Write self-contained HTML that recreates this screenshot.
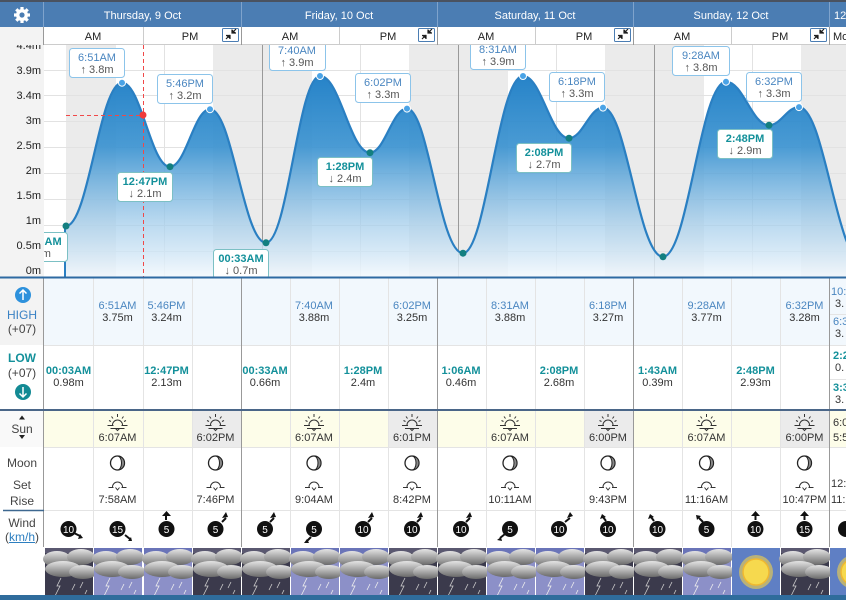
<!DOCTYPE html>
<html><head><meta charset="utf-8">
<style>
*{margin:0;padding:0;box-sizing:border-box}
body{width:846px;height:600px;overflow:hidden;background:#fff;font-family:"Liberation Sans",sans-serif;font-size:11px;color:#333;position:relative}
.a{position:absolute}
.c{position:absolute;width:70px;margin-left:-35px;text-align:center;line-height:12px;white-space:nowrap}
.ht{color:#4a86c0}
.lt{color:#13909a;font-weight:bold}
.lb{position:absolute;text-align:center;width:44px;left:0;color:#444;font-size:12px}
</style></head><body>
<div class="a" style="left:0;top:0;width:846px;height:27px;background:#4b7db3;border-top:2px solid #4a5260"></div>
<div class="a" style="left:43px;top:2px;width:1px;height:25px;background:#7fa3cc"></div>
<div class="a" style="left:241px;top:2px;width:1px;height:25px;background:#7fa3cc"></div>
<div class="a" style="left:437px;top:2px;width:1px;height:25px;background:#7fa3cc"></div>
<div class="a" style="left:633px;top:2px;width:1px;height:25px;background:#7fa3cc"></div>
<div class="a" style="left:829px;top:2px;width:1px;height:25px;background:#7fa3cc"></div>
<svg class="a" style="left:13px;top:6px" width="18" height="18" viewBox="0 0 18 18"><g fill="#fff"><circle cx="9" cy="9" r="6"/><g stroke="#fff" stroke-width="3.2"><line x1="9" y1="1" x2="9" y2="17"/><line x1="1" y1="9" x2="17" y2="9"/><line x1="3.3" y1="3.3" x2="14.7" y2="14.7"/><line x1="14.7" y1="3.3" x2="3.3" y2="14.7"/></g></g><circle cx="9" cy="9" r="2.6" fill="#4b7db3"/></svg>
<div class="a" style="left:44px;top:10px;width:197px;text-align:center;color:#fff">Thursday, 9 Oct</div>
<div class="a" style="left:241px;top:10px;width:196px;text-align:center;color:#fff">Friday, 10 Oct</div>
<div class="a" style="left:437px;top:10px;width:196px;text-align:center;color:#fff">Saturday, 11 Oct</div>
<div class="a" style="left:633px;top:10px;width:196px;text-align:center;color:#fff">Sunday, 12 Oct</div>
<div class="a" style="left:834px;top:10px;color:#fff">12</div>
<div class="a" style="left:44px;top:27px;width:802px;height:18px;background:#fff;border-bottom:1px solid #ccc"></div>
<div class="a" style="left:0;top:27px;width:44px;height:18px;background:#f3f3f3"></div>
<div class="a" style="left:43px;top:27px;width:1px;height:250px;background:#999"></div>
<div class="a" style="left:143px;top:27px;width:1px;height:18px;background:#ccc"></div>
<div class="a" style="left:241px;top:27px;width:1px;height:18px;background:#999"></div>
<div class="a" style="left:339px;top:27px;width:1px;height:18px;background:#ccc"></div>
<div class="a" style="left:437px;top:27px;width:1px;height:18px;background:#999"></div>
<div class="a" style="left:535px;top:27px;width:1px;height:18px;background:#ccc"></div>
<div class="a" style="left:633px;top:27px;width:1px;height:18px;background:#999"></div>
<div class="a" style="left:731px;top:27px;width:1px;height:18px;background:#ccc"></div>
<div class="a" style="left:829px;top:27px;width:1px;height:18px;background:#999"></div>
<div class="c" style="left:93px;top:31px;color:#222">AM</div><div class="c" style="left:190px;top:31px;color:#222">PM</div>
<div class="c" style="left:290px;top:31px;color:#222">AM</div><div class="c" style="left:388px;top:31px;color:#222">PM</div>
<div class="c" style="left:486px;top:31px;color:#222">AM</div><div class="c" style="left:584px;top:31px;color:#222">PM</div>
<div class="c" style="left:682px;top:31px;color:#222">AM</div><div class="c" style="left:780px;top:31px;color:#222">PM</div>
<div class="a" style="left:833px;top:31px;color:#222">Mo</div>
<svg class="a" style="left:0;top:0" width="846" height="45"><g fill="none" stroke="#4b7db3">
<rect x="222.5" y="28.5" width="16" height="13" rx="1"/><rect x="418.5" y="28.5" width="16" height="13" rx="1"/><rect x="614.5" y="28.5" width="16" height="13" rx="1"/><rect x="810.5" y="28.5" width="16" height="13" rx="1"/></g>
<g stroke="#222" stroke-width="1.2"><path d="M226 39l4-4M232 33l4-4M226 35.5h4v3.5M232 29.5v3.5h4"/><path d="M422 39l4-4M428 33l4-4M422 35.5h4v3.5M428 29.5v3.5h4"/><path d="M618 39l4-4M624 33l4-4M618 35.5h4v3.5M624 29.5v3.5h4"/><path d="M814 39l4-4M820 33l4-4M814 35.5h4v3.5M820 29.5v3.5h4"/></g></svg>
<svg class="a" style="left:0;top:45px" width="846" height="233" viewBox="0 45 846 233">
<defs><linearGradient id="g" x1="0" y1="76" x2="0" y2="277" gradientUnits="userSpaceOnUse"><stop offset="0" stop-color="#2683c8"/><stop offset="0.35" stop-color="#3a92d0" stop-opacity="0.92"/><stop offset="0.75" stop-color="#a9d0ec" stop-opacity="0.75"/><stop offset="1" stop-color="#f2f8fd" stop-opacity="0.85"/></linearGradient>
<clipPath id="cp"><rect x="44" y="45" width="802" height="233"/></clipPath></defs>
<rect x="0" y="45" width="44" height="233" fill="#f3f3f3"/>
<g clip-path="url(#cp)">
<rect x="44" y="45" width="802" height="233" fill="#fff"/>
<g fill="#ebebeb"><rect x="66" y="45" width="50" height="232"/><rect x="213" y="45" width="99" height="232"/><rect x="409" y="45" width="99" height="232"/><rect x="605" y="45" width="99" height="232"/><rect x="801" y="45" width="50" height="232"/></g>
<g stroke="#e2e2e2"><path d="M44 251.5H846M44 225.5H846M44 199.5H846M44 173.5H846M44 147.5H846M44 121.5H846M44 95.5H846M44 70.5H846"/><path d="M164.5 45V277M360.5 45V277M556.5 45V277M752.5 45V277"/></g>
<g stroke="#999"><path d="M262.5 45V277M458.5 45V277M654.5 45V277M849.5 45V277"/></g>
<path fill="url(#g)" d="M66,226 C88.4,226 99.6,82.7 122,82.7 C141.2,82.7 150.8,166.7 170,166.7 C186,166.7 194,109.2 210,109.2 C232.4,109.2 243.6,242.8 266,242.8 C287.6,242.8 298.4,76 320,76 C340,76 350,152.7 370,152.7 C384.8,152.7 392.2,108.6 407,108.6 C428.6,108.6 439.4,253.2 463,253.2 C486,253.2 498.2,76 523,76 C541.4,76 550.6,138.2 569,138.2 C582.6,138.2 589.4,107.6 603,107.6 C626.6,107.6 638.4,256.8 663,256.8 C688,256.8 700.4,81.7 726,81.7 C743.2,81.7 751.8,125.2 769,125.2 C781,125.2 787,107.1 799,107.1 C824.2,107.1 836.8,261 862,261 L862,277 L66,277 Z"/>
<path fill="none" stroke="#2a7fc2" stroke-width="2.2" d="M66,226 C88.4,226 99.6,82.7 122,82.7 C141.2,82.7 150.8,166.7 170,166.7 C186,166.7 194,109.2 210,109.2 C232.4,109.2 243.6,242.8 266,242.8 C287.6,242.8 298.4,76 320,76 C340,76 350,152.7 370,152.7 C384.8,152.7 392.2,108.6 407,108.6 C428.6,108.6 439.4,253.2 463,253.2 C486,253.2 498.2,76 523,76 C541.4,76 550.6,138.2 569,138.2 C582.6,138.2 589.4,107.6 603,107.6 C626.6,107.6 638.4,256.8 663,256.8 C688,256.8 700.4,81.7 726,81.7 C743.2,81.7 751.8,125.2 769,125.2 C781,125.2 787,107.1 799,107.1 C824.2,107.1 836.8,261 862,261"/>
<path d="M65 226V277" stroke="#2a7fc2" stroke-width="2"/>
<g stroke="#f04848" stroke-dasharray="4,3" fill="none"><path d="M143.5 45V277M66 115.5H143"/></g>
<circle cx="143" cy="115" r="3.5" fill="#f03a3a"/>
<g fill="#4aa3e6" stroke="#fff" stroke-width="1"><circle cx="122" cy="82.7" r="3.5"/><circle cx="210" cy="109.2" r="3.5"/><circle cx="320" cy="76" r="3.5"/><circle cx="407" cy="108.6" r="3.5"/><circle cx="523" cy="76" r="3.5"/><circle cx="603" cy="107.6" r="3.5"/><circle cx="726" cy="81.7" r="3.5"/><circle cx="799" cy="107.1" r="3.5"/></g>
<g fill="#137f80"><circle cx="66" cy="226" r="3.5"/><circle cx="170" cy="166.7" r="3.5"/><circle cx="266" cy="242.8" r="3.5"/><circle cx="370" cy="152.7" r="3.5"/><circle cx="463" cy="253.2" r="3.5"/><circle cx="569" cy="138.2" r="3.5"/><circle cx="663" cy="256.8" r="3.5"/><circle cx="769" cy="125.2" r="3.5"/></g>
<g font-family="Liberation Sans,sans-serif" font-size="11" text-anchor="middle">
<g fill="#fff" stroke="#8cc4ea"><rect x="69.5" y="48.5" width="55" height="29" rx="3"/><rect x="157.5" y="74.5" width="55" height="29" rx="3"/><rect x="269.5" y="41.5" width="56" height="29" rx="3"/><rect x="355.5" y="73.5" width="55" height="29" rx="3"/><rect x="470.5" y="40.5" width="55" height="29" rx="3"/><rect x="549.5" y="72.5" width="55" height="29" rx="3"/><rect x="672.5" y="46.5" width="57" height="29" rx="3"/><rect x="746.5" y="72.5" width="55" height="29" rx="3"/></g>
<g fill="#fff" stroke="#7cc0c4"><rect x="10.5" y="232.5" width="57" height="29" rx="3"/><rect x="117.5" y="172.5" width="55" height="29" rx="3"/><rect x="213.5" y="249.5" width="55" height="29" rx="3"/><rect x="317.5" y="157.5" width="55" height="29" rx="3"/><rect x="516.5" y="143.5" width="55" height="29" rx="3"/><rect x="717.5" y="129.5" width="55" height="29" rx="3"/></g>
<g fill="#4a86c0"><text x="97" y="61">6:51AM</text><text x="185" y="87">5:46PM</text><text x="297" y="54">7:40AM</text><text x="383" y="86">6:02PM</text><text x="498" y="53">8:31AM</text><text x="577" y="85">6:18PM</text><text x="701" y="59">9:28AM</text><text x="774" y="85">6:32PM</text></g>
<g fill="#555"><text x="97" y="73">↑ 3.8m</text><text x="185" y="99">↑ 3.2m</text><text x="297" y="66">↑ 3.9m</text><text x="383" y="98">↑ 3.3m</text><text x="498" y="65">↑ 3.9m</text><text x="577" y="97">↑ 3.3m</text><text x="701" y="71">↑ 3.8m</text><text x="774" y="97">↑ 3.3m</text></g>
<g fill="#13909a" font-weight="bold"><text x="39" y="245">00:03AM</text><text x="145" y="185">12:47PM</text><text x="241" y="262">00:33AM</text><text x="345" y="170">1:28PM</text><text x="544" y="156">2:08PM</text><text x="745" y="142">2:48PM</text></g>
<g fill="#555"><text x="39" y="257">↓ 1m</text><text x="145" y="197">↓ 2.1m</text><text x="241" y="274">↓ 0.7m</text><text x="345" y="182">↓ 2.4m</text><text x="544" y="168">↓ 2.7m</text><text x="745" y="154">↓ 2.9m</text></g>
</g></g>
<g font-family="Liberation Sans,sans-serif" font-size="11" fill="#222" text-anchor="end"><text x="41" y="49">4.4m</text><text x="41" y="74">3.9m</text><text x="41" y="99">3.4m</text><text x="41" y="124">3m</text><text x="41" y="149">2.5m</text><text x="41" y="174">2m</text><text x="41" y="199">1.5m</text><text x="41" y="224">1m</text><text x="41" y="249">0.5m</text><text x="41" y="274">0m</text></g>
</svg>
<div class="a" style="left:0;top:278px;width:846px;height:67px;background:#f2f8fd"></div>
<div class="a" style="left:0;top:278px;width:44px;height:132px;background:#f3f3f3"></div>
<div class="a" style="left:0;top:345px;width:44px;height:65px;background:#fff"></div>
<div class="a" style="left:44px;top:411px;width:802px;height:36px;background:#fdfde9"></div>
<div class="a" style="left:0;top:411px;width:44px;height:36px;background:#f9f9f9"></div>
<div class="a" style="left:192px;top:411px;width:49px;height:36px;background:#ebebeb"></div>
<div class="a" style="left:388px;top:411px;width:49px;height:36px;background:#ebebeb"></div>
<div class="a" style="left:584px;top:411px;width:49px;height:36px;background:#ebebeb"></div>
<div class="a" style="left:780px;top:411px;width:49px;height:36px;background:#ebebeb"></div>
<svg class="a" style="left:0;top:276px" width="846" height="324" viewBox="0 276 846 324">
<g stroke="#e4e4e4"><path d="M93.5 278V547M143.5 278V547M192.5 278V547M290.5 278V547M339.5 278V547M388.5 278V547M486.5 278V547M535.5 278V547M584.5 278V547M682.5 278V547M731.5 278V547M780.5 278V547"/><path d="M44 345.5H846M44 447.5H846M44 510.5H846"/><path d="M829 314.5H846M829 379.5H846"/></g>
<g stroke="#999"><path d="M43.5 278V600M241.5 278V547M437.5 278V547M633.5 278V547M829.5 278V547"/></g>
<path d="M0 277.5H846" stroke="#2e6aa2" stroke-width="2"/>
<path d="M0 410H846" stroke="#4a6688" stroke-width="2"/>
<path d="M3 510.5H44" stroke="#3e6890" stroke-width="1.5"/>
<circle cx="23" cy="295" r="8" fill="#2d91dc"/><path d="M23 300V290M19.5 293.5L23 290L26.5 293.5" stroke="#fff" stroke-width="1.5" fill="none"/>
<circle cx="23" cy="392" r="8" fill="#138a94"/><path d="M23 387V397M19.5 393.5L23 397L26.5 393.5" stroke="#fff" stroke-width="1.5" fill="none"/>
<path d="M19 419.5h6l-3-4z M19 435h6l-3 4z" fill="#222"/>
</svg>
<div class="lb" style="top:308px;color:#3a82c4;font-size:12px">HIGH</div>
<div class="lb" style="top:322px">(+07)</div>
<div class="lb" style="top:351px;color:#13909a;font-weight:bold;font-size:12px">LOW</div>
<div class="lb" style="top:366px">(+07)</div>
<div class="lb" style="top:422px">Sun</div>
<div class="lb" style="top:456px">Moon</div>
<div class="lb" style="top:478px">Set</div>
<div class="lb" style="top:494px">Rise</div>
<div class="lb" style="top:516px">Wind</div>
<div class="lb" style="top:530px">(<span style="color:#2d7fc0;text-decoration:underline">km/h</span>)</div>
<div class="c ht" style="left:117.5px;top:300px">6:51AM</div><div class="c" style="left:117.5px;top:312px">3.75m</div>
<div class="c ht" style="left:166.5px;top:300px">5:46PM</div><div class="c" style="left:166.5px;top:312px">3.24m</div>
<div class="c ht" style="left:314px;top:300px">7:40AM</div><div class="c" style="left:314px;top:312px">3.88m</div>
<div class="c ht" style="left:412px;top:300px">6:02PM</div><div class="c" style="left:412px;top:312px">3.25m</div>
<div class="c ht" style="left:510px;top:300px">8:31AM</div><div class="c" style="left:510px;top:312px">3.88m</div>
<div class="c ht" style="left:608px;top:300px">6:18PM</div><div class="c" style="left:608px;top:312px">3.27m</div>
<div class="c ht" style="left:706.5px;top:300px">9:28AM</div><div class="c" style="left:706.5px;top:312px">3.77m</div>
<div class="c ht" style="left:804.5px;top:300px">6:32PM</div><div class="c" style="left:804.5px;top:312px">3.28m</div>
<div class="a ht" style="left:831px;top:286px">10:</div><div class="a" style="left:835px;top:298px">3.</div>
<div class="a ht" style="left:833px;top:316px">6:3</div><div class="a" style="left:835px;top:328px">3.</div>
<div class="c lt" style="left:68.5px;top:365px">00:03AM</div><div class="c" style="left:68.5px;top:377px">0.98m</div>
<div class="c lt" style="left:166.5px;top:365px">12:47PM</div><div class="c" style="left:166.5px;top:377px">2.13m</div>
<div class="c lt" style="left:265px;top:365px">00:33AM</div><div class="c" style="left:265px;top:377px">0.66m</div>
<div class="c lt" style="left:363px;top:365px">1:28PM</div><div class="c" style="left:363px;top:377px">2.4m</div>
<div class="c lt" style="left:461px;top:365px">1:06AM</div><div class="c" style="left:461px;top:377px">0.46m</div>
<div class="c lt" style="left:559px;top:365px">2:08PM</div><div class="c" style="left:559px;top:377px">2.68m</div>
<div class="c lt" style="left:657.5px;top:365px">1:43AM</div><div class="c" style="left:657.5px;top:377px">0.39m</div>
<div class="c lt" style="left:755.5px;top:365px">2:48PM</div><div class="c" style="left:755.5px;top:377px">2.93m</div>
<div class="a lt" style="left:833px;top:350px">2:2</div><div class="a" style="left:835px;top:362px">0.</div>
<div class="a lt" style="left:833px;top:382px">3:3</div><div class="a" style="left:835px;top:394px">3.</div>
<svg class="a" style="left:0;top:410px" width="846" height="140" viewBox="0 410 846 140">
<defs>
<g id="sr" fill="none" stroke="#333" stroke-width="1"><path d="M-5 425A5 5 0 0 1 5 425M-10 425.5H-4M4 425.5H10M-7 428.5H7M0 414V417M-6 416.5L-4.5 418.5M6 416.5L4.5 418.5M-8.5 420.5L-6.5 421.5M8.5 420.5L6.5 421.5M-2 428.5L0 430.5L2 428.5"/></g>
<g id="mn"><circle cx="0" cy="463" r="7" fill="#fff" stroke="#222" stroke-width="1.3"/><path d="M0 456A7 7 0 0 1 0 470A4 7 0 0 0 0 456z" fill="#888" stroke="#222" stroke-width="1"/></g>
<g id="mr" fill="none" stroke="#333" stroke-width="1"><path d="M-5 487A5 5 0 0 1 5 487M-9 487.5H-4M4 487.5H9M-2 487.5L0 490L2 487.5"/></g>
</defs>
<use href="#sr" x="117.5"/><use href="#sr" x="215.5"/><use href="#sr" x="314"/><use href="#sr" x="412"/><use href="#sr" x="510"/><use href="#sr" x="608"/><use href="#sr" x="706.5"/><use href="#sr" x="804.5"/>
<use href="#mn" x="117.5"/><use href="#mn" x="215.5"/><use href="#mn" x="314"/><use href="#mn" x="412"/><use href="#mn" x="510"/><use href="#mn" x="608"/><use href="#mn" x="706.5"/><use href="#mn" x="804.5"/>
<use href="#mr" x="117.5"/><use href="#mr" x="215.5"/><use href="#mr" x="314"/><use href="#mr" x="412"/><use href="#mr" x="510"/><use href="#mr" x="608"/><use href="#mr" x="706.5"/><use href="#mr" x="804.5"/>
<g font-family="Liberation Sans,sans-serif" font-size="10" text-anchor="middle" fill="#fff">
<g fill="#111"><circle cx="68.5" cy="529" r="8"/><circle cx="117.5" cy="529" r="8"/><circle cx="166.5" cy="529" r="8"/><circle cx="215.5" cy="529" r="8"/><circle cx="265" cy="529" r="8"/><circle cx="314" cy="529" r="8"/><circle cx="363" cy="529" r="8"/><circle cx="412" cy="529" r="8"/><circle cx="461" cy="529" r="8"/><circle cx="510" cy="529" r="8"/><circle cx="559" cy="529" r="8"/><circle cx="608" cy="529" r="8"/><circle cx="657.5" cy="529" r="8"/><circle cx="706.5" cy="529" r="8"/><circle cx="755.5" cy="529" r="8"/><circle cx="804.5" cy="529" r="8"/><circle cx="846" cy="529" r="8"/></g>
<g stroke="#111" stroke-width="2" fill="none"><path d="M74 533l6 3M125 535l5 4M166 520v-5M222 522l4-4M270 522l4-4M311 537l-4 4M368 522l4-4M417 522l4-4M466 522l4-4M505 534l-5 4M565 522l5-4M606 521l-3-4M654 521l-3-4M703 522l-4-4M755.5 520v-5M804.5 520v-5"/></g>
<g fill="#111"><path d="M78 539l5-1-3-4z M128 541l4 0-1-4z M162 516h9l-4.5-5z M222 518l6-1-2-5z M270 518l6-1-2-5z M304 543l5 0-2-4z M368 518l6-1-2-5z M417 518l6-1-2-5z M466 518l6-1-2-5z M497 540l5 1-1-4z M567 518l6-2-3-4z M600 519l6-2-4-3z M648 519l6-2-4-3z M697 520l4-4-5-1z M751 516h9l-4.5-5z M800 516h9l-4.5-5z"/></g>
<text x="68.5" y="533">10</text><text x="117.5" y="533">15</text><text x="166.5" y="533">5</text><text x="215.5" y="533">5</text><text x="265" y="533">5</text><text x="314" y="533">5</text><text x="363" y="533">10</text><text x="412" y="533">10</text><text x="461" y="533">10</text><text x="510" y="533">5</text><text x="559" y="533">10</text><text x="608" y="533">10</text><text x="657.5" y="533">10</text><text x="706.5" y="533">5</text><text x="755.5" y="533">10</text><text x="804.5" y="533">15</text></g>
</svg>
<div class="c" style="left:117.5px;top:432px">6:07AM</div><div class="c" style="left:215.5px;top:432px">6:02PM</div>
<div class="c" style="left:314px;top:432px">6:07AM</div><div class="c" style="left:412px;top:432px">6:01PM</div>
<div class="c" style="left:510px;top:432px">6:07AM</div><div class="c" style="left:608px;top:432px">6:00PM</div>
<div class="c" style="left:706.5px;top:432px">6:07AM</div><div class="c" style="left:804.5px;top:432px">6:00PM</div>
<div class="a" style="left:833px;top:417px">6:0</div><div class="a" style="left:833px;top:432px">5:5</div>
<div class="c" style="left:117.5px;top:494px">7:58AM</div><div class="c" style="left:215.5px;top:494px">7:46PM</div>
<div class="c" style="left:314px;top:494px">9:04AM</div><div class="c" style="left:412px;top:494px">8:42PM</div>
<div class="c" style="left:510px;top:494px">10:11AM</div><div class="c" style="left:608px;top:494px">9:43PM</div>
<div class="c" style="left:706.5px;top:494px">11:16AM</div><div class="c" style="left:804.5px;top:494px">10:47PM</div>
<div class="a" style="left:831px;top:478px">12:</div><div class="a" style="left:831px;top:494px">11:</div>
<svg class="a" style="left:0;top:547px" width="846" height="53" viewBox="0 547 846 53">
<defs>
<linearGradient id="cl" x1="0" y1="0" x2="0" y2="1"><stop offset="0" stop-color="#e4e4e4"/><stop offset="1" stop-color="#6a6a6a"/></linearGradient>
<g id="ng"><rect x="0" y="548" width="48" height="48" fill="#3b3a4c"/><rect x="0" y="548" width="48" height="5" fill="#5a5870"/><ellipse cx="12" cy="559" rx="14" ry="8" fill="url(#cl)"/><ellipse cx="36" cy="557" rx="14" ry="8" fill="url(#cl)"/><ellipse cx="18" cy="569" rx="18" ry="8" fill="url(#cl)"/><ellipse cx="38" cy="572" rx="14" ry="7" fill="url(#cl)"/><path d="M16 578l-4 8 3 0-5 10M30 584l-3 6M38 582l-3 6M42 590l-2 4" stroke="#ccc" fill="none" stroke-width="0.8"/></g>
<g id="dy"><rect x="0" y="548" width="48" height="48" fill="#8c90c8"/><rect x="0" y="548" width="48" height="6" fill="#6a74b8"/><ellipse cx="12" cy="559" rx="14" ry="8" fill="url(#cl)"/><ellipse cx="36" cy="557" rx="14" ry="8" fill="url(#cl)"/><ellipse cx="18" cy="569" rx="18" ry="8" fill="url(#cl)"/><ellipse cx="38" cy="572" rx="14" ry="7" fill="url(#cl)"/><path d="M16 578l-4 8 3 0-5 10M30 584l-3 6M38 582l-3 6M42 590l-2 4" stroke="#eee" fill="none" stroke-width="0.8"/></g>
<g id="sn"><rect x="0" y="548" width="48" height="48" fill="#5f7fc4"/><circle cx="24" cy="572" r="17" fill="#f4d24a" opacity="0.6"/><circle cx="24" cy="572" r="13" fill="#f6d94e" stroke="#f0b830" stroke-width="1.5"/></g>
</defs>
<rect x="0" y="547" width="846" height="53" fill="#fff"/>
<use href="#ng" x="45"/><use href="#dy" x="94"/><use href="#dy" x="144"/><use href="#ng" x="193"/>
<use href="#ng" x="242"/><use href="#dy" x="291"/><use href="#dy" x="340"/><use href="#ng" x="389"/>
<use href="#ng" x="438"/><use href="#dy" x="487"/><use href="#dy" x="536"/><use href="#ng" x="585"/>
<use href="#ng" x="634"/><use href="#dy" x="683"/><use href="#sn" x="732"/><use href="#ng" x="781"/>
<use href="#sn" x="830"/>
<rect x="0" y="595" width="846" height="5" fill="#2f6c9c"/>
</svg>
</body></html>
